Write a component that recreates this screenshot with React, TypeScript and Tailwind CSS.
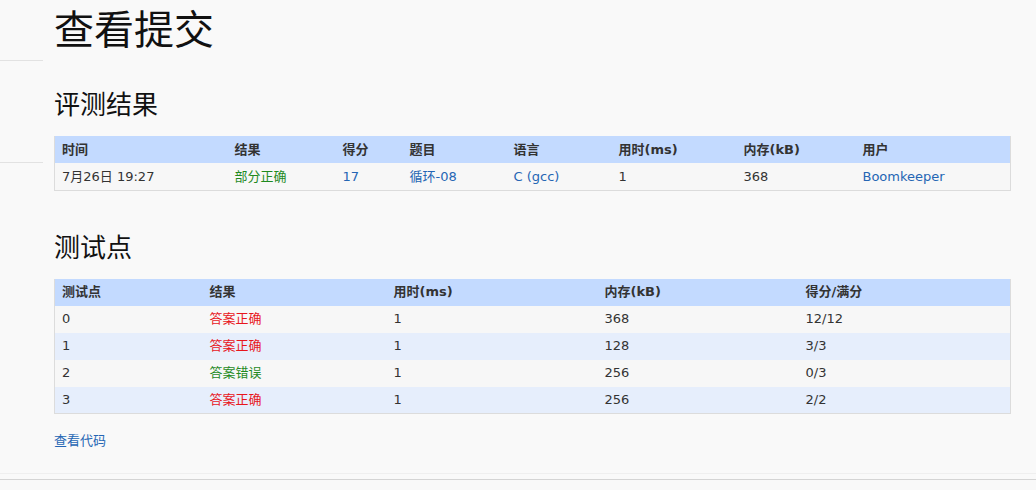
import React from 'react';

const font = { fontFamily: '"DejaVu Sans", "Noto Sans CJK SC", sans-serif' };

const blue = 'text-[#2566b4]';
const green = 'text-[#1f8a1f]';
const red = 'text-[#e8161c]';

type Cell = { text: string; color?: string };

const resultCols = [173, 108, 67, 104, 105, 125, 119, 155];
const resultHead = ['时间', '结果', '得分', '题目', '语言', '用时(ms)', '内存(kB)', '用户'];
const resultRows: Cell[][] = [
  [
    { text: '7月26日 19:27' },
    { text: '部分正确', color: green },
    { text: '17', color: blue },
    { text: '循环-08', color: blue },
    { text: 'C (gcc)', color: blue },
    { text: '1' },
    { text: '368' },
    { text: 'Boomkeeper', color: blue },
  ],
];

const caseCols = [148, 184, 211, 201, 212];
const caseHead = ['测试点', '结果', '用时(ms)', '内存(kB)', '得分/满分'];
const caseRows: Cell[][] = [
  [{ text: '0' }, { text: '答案正确', color: red }, { text: '1' }, { text: '368' }, { text: '12/12' }],
  [{ text: '1' }, { text: '答案正确', color: red }, { text: '1' }, { text: '128' }, { text: '3/3' }],
  [{ text: '2' }, { text: '答案错误', color: green }, { text: '1' }, { text: '256' }, { text: '0/3' }],
  [{ text: '3' }, { text: '答案正确', color: red }, { text: '1' }, { text: '256' }, { text: '2/2' }],
];

const DataTable = ({ cols, head, rows }: { cols: number[]; head: string[]; rows: Cell[][] }) => (
  <table className="w-[956px] table-fixed border-collapse border-r border-b border-l border-[#dcdcdc] text-[13px]">
    <colgroup>
      {cols.map((w, i) => (
        <col key={i} style={{ width: w }} />
      ))}
    </colgroup>
    <thead>
      <tr className="h-[27px] bg-[#c3daff]">
        {head.map((h) => (
          <th key={h} className="pl-[7px] text-left font-bold text-[#333]">
            {h}
          </th>
        ))}
      </tr>
    </thead>
    <tbody>
      {rows.map((r, i) => (
        <tr key={i} className={`h-[27px] ${i % 2 === 0 ? 'bg-[#f7f7f7]' : 'bg-[#e6eefc]'}`}>
          {r.map((c, j) => (
            <td key={j} className={`pl-[7px] ${c.color ?? 'text-[#333]'}`}>
              {c.text}
            </td>
          ))}
        </tr>
      ))}
    </tbody>
  </table>
);

export default function App() {
  return (
    <div className="min-h-[490px] w-[1036px] bg-[#f9f9f9] text-[#111]" style={font}>
      <div className="flex h-[473px]">
        <aside className="w-[43px] shrink-0 pt-[60px]">
          <div className="h-[103px] border-t border-b border-[#e2e2e2]" />
        </aside>
        <main className="pl-[11px]">
          <h1 className="h-[60px] text-[40px] leading-[60px] font-normal text-[#111]">查看提交</h1>

          <h2 className="mt-[27px] h-[36px] text-[26px] leading-[36px] font-normal">评测结果</h2>
          <div className="mt-[13px]">
            <DataTable cols={resultCols} head={resultHead} rows={resultRows} />
          </div>

          <h2 className="mt-[39px] h-[36px] text-[26px] leading-[36px] font-normal">测试点</h2>
          <div className="mt-[13px]">
            <DataTable cols={caseCols} head={caseHead} rows={caseRows} />
          </div>

          <a href="#" className={`mt-[17px] block text-[13px] leading-[20px] ${blue}`}>
            查看代码
          </a>
        </main>
      </div>
      <div className="h-[6px] border-t border-[#efefef]" />
      <div className="h-[11px] border-t border-[#d4d4d4]" />
    </div>
  );
}
